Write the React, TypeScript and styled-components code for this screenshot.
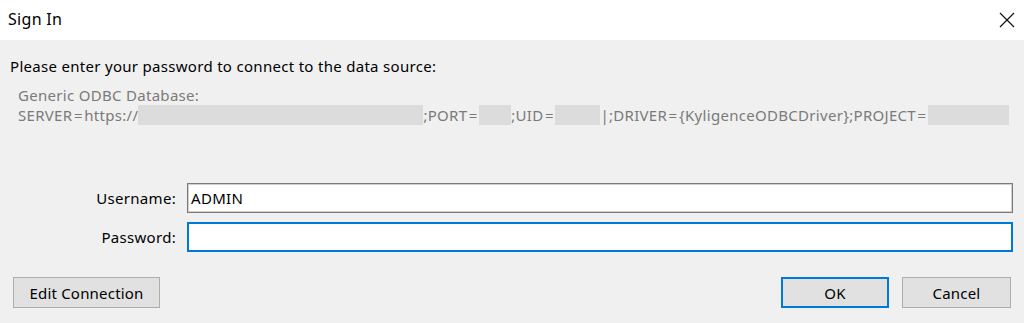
import React from "react";
import styled, { createGlobalStyle } from "styled-components";

const Global = createGlobalStyle`
  html, body { margin: 0; padding: 0; background: #f0f0f0; }
  body { font-family: "Noto Sans", "Open Sans", sans-serif; }
  * { box-sizing: border-box; }
`;

const Dialog = styled.div`
  width: 1024px;
  height: 323px;
  background: #f0f0f0;
  display: flex;
  flex-direction: column;
  overflow: hidden;
  font-size: 15px;
  letter-spacing: 0.3px;
`;

const TitleBar = styled.div`
  height: 40px;
  background: #ffffff;
  display: flex;
  align-items: center;
  justify-content: space-between;
  padding: 0 9px 2px 8px;
`;

const Title = styled.div`
  font-size: 16px;
  letter-spacing: 0.3px;
  color: #000;
`;

const CloseButton = styled.div`
  width: 16px;
  height: 16px;
  display: flex;
  align-items: center;
  justify-content: center;
  margin-top: 2px;
`;

const Body = styled.div`
  flex: 1;
  display: flex;
  flex-direction: column;
  padding: 16px 11px 0 10px;
`;

const Prompt = styled.div`
  line-height: 20px;
  color: #000;
`;

const Info = styled.div`
  margin: 9px 0 0 8px;
  line-height: 20px;
  color: #7a7a7a;
  white-space: nowrap;
`;

const InfoLine = styled.div`
  display: flex;
  align-items: center;
`;

const Eq = styled.span`
  margin: 0 1.5px;
`;

const Redacted = styled.span<{ $w: number }>`
  display: inline-block;
  width: ${(p) => p.$w}px;
  height: 20px;
  background: #dcdcdc;
`;

const Form = styled.div`
  margin-top: 58px;
  display: grid;
  grid-template-columns: 166px 1fr;
  column-gap: 11px;
  row-gap: 9px;
  align-items: center;
`;

const Label = styled.label`
  text-align: right;
  color: #000;
`;

const Input = styled.div<{ $focused?: boolean }>`
  height: 30px;
  background: #fff;
  border: ${(p) => (p.$focused ? "2px solid #0078d7" : "1px solid #7a7a7a")};
  box-shadow: ${(p) => (p.$focused ? "none" : "inset 0 0 0 1px #cfcfcf")};
  display: flex;
  align-items: center;
  padding-left: 3px;
  color: #000;
`;

const Footer = styled.div`
  margin-top: 25px;
  display: flex;
  align-items: center;
  padding-left: 3px;
`;

const Button = styled.div<{ $primary?: boolean; $w: number }>`
  width: ${(p) => p.$w}px;
  height: 31px;
  background: #e1e1e1;
  border: ${(p) => (p.$primary ? "2px solid #0078d7" : "1px solid #adadad")};
  display: flex;
  align-items: center;
  justify-content: center;
  color: #000;
  letter-spacing: 0.2px;
`;

const Spacer = styled.div`
  flex: 1;
`;

const ButtonGroup = styled.div`
  display: flex;
  gap: 13px;
  margin-right: 2px;
`;

export default function App() {
  return (
    <>
      <Global />
      <Dialog>
        <TitleBar>
          <Title>Sign In</Title>
          <CloseButton>
            <svg width="16" height="16" viewBox="0 0 16 16">
              <path d="M1 1 L15 15 M15 1 L1 15" stroke="#111" strokeWidth="1.2" />
            </svg>
          </CloseButton>
        </TitleBar>
        <Body>
          <Prompt>Please enter your password to connect to the data source:</Prompt>
          <Info>
            <InfoLine>Generic ODBC Database:</InfoLine>
            <InfoLine>
              SERVER<Eq>=</Eq>https://<Redacted $w={285} />;PORT<Eq>=</Eq>
              <Redacted $w={32} />;UID<Eq>=</Eq>
              <Redacted $w={45} />|;DRIVER<Eq>=</Eq>
              {"{"}KyligenceODBCDriver{"}"};PROJECT<Eq>=</Eq>
              <Redacted $w={81} />
            </InfoLine>
          </Info>
          <Form>
            <Label>Username:</Label>
            <Input>ADMIN</Input>
            <Label>Password:</Label>
            <Input $focused />
          </Form>
          <Footer>
            <Button $w={147}>Edit Connection</Button>
            <Spacer />
            <ButtonGroup>
              <Button $primary $w={108}>OK</Button>
              <Button $w={109}>Cancel</Button>
            </ButtonGroup>
          </Footer>
        </Body>
      </Dialog>
    </>
  );
}
